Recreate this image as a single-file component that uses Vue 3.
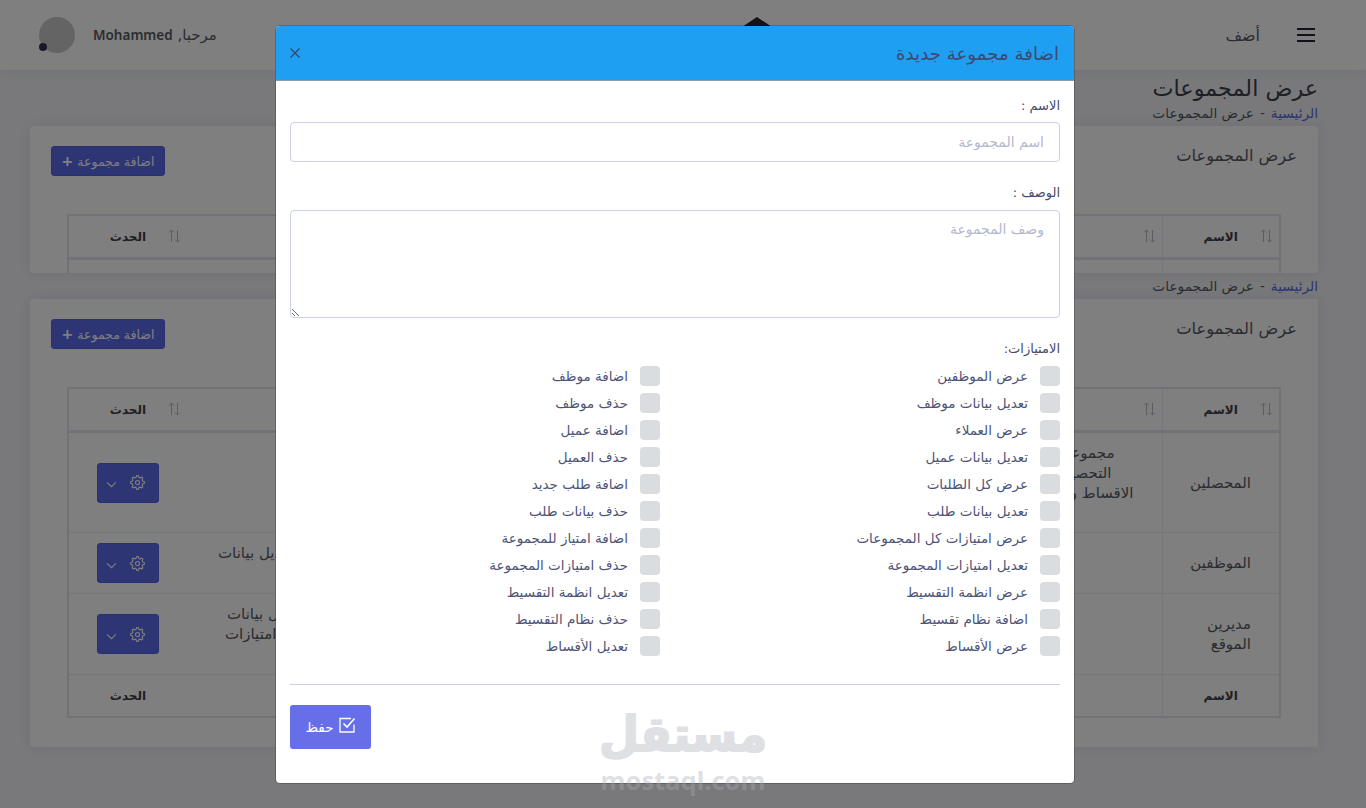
<template>
  <div class="page" dir="rtl">
    <header class="topbar">
      <div class="top-start">
        <svg class="burger" width="20" height="16" viewBox="0 0 20 16"><path d="M1 2h18M1 8h18M1 14h18" stroke="#1f2430" stroke-width="2" fill="none" /></svg>
        <span class="add-link">أضف</span>
      </div>
      <svg class="logo" width="36" height="12" viewBox="0 0 36 12"><polygon points="18,0 33,10 33,12 3,12 3,10" fill="#23262e" /></svg>
      <div class="top-end">
        <span class="hello">مرحبا, <b>Mohammed</b></span>
        <span class="avatar"><i class="status"></i></span>
      </div>
    </header>

    <main class="content">
      <h1 class="page-title">عرض المجموعات</h1>
      <div class="crumbs"><a>الرئيسية</a><span>-</span><span>عرض المجموعات</span></div>

      <section class="card card-cut">
        <div class="card-head">
          <h2>عرض المجموعات</h2>
          <button class="btn-add">اضافة مجموعة <span class="plus">+</span></button>
        </div>
        <table class="groups">
          <colgroup><col class="c-name" /><col class="c-desc" /><col class="c-priv" /><col class="c-act" /></colgroup>
          <thead>
            <tr>
              <th v-for="h in heads" :key="h">{{ h }}<svg class="sort" width="13" height="14" viewBox="0 0 13 14"><path d="M3.5 13V1M1 3.5 3.500 1 6 3.500M9.500 1v12M7 10.500 9.500 13 12 10.500" fill="none" stroke="#b8bac6" stroke-width="1" /></svg></th>
            </tr>
          </thead>
          <tbody>
            <tr class="stub"><td></td><td></td><td></td><td></td></tr>
          </tbody>
        </table>
      </section>

      <div class="crumbs crumbs-2"><a>الرئيسية</a><span>-</span><span>عرض المجموعات</span></div>

      <section class="card">
        <div class="card-head">
          <h2>عرض المجموعات</h2>
          <button class="btn-add">اضافة مجموعة <span class="plus">+</span></button>
        </div>
        <table class="groups">
          <colgroup><col class="c-name" /><col class="c-desc" /><col class="c-priv" /><col class="c-act" /></colgroup>
          <thead>
            <tr>
              <th v-for="h in heads" :key="h">{{ h }}<svg class="sort" width="13" height="14" viewBox="0 0 13 14"><path d="M3.5 13V1M1 3.5 3.500 1 6 3.500M9.500 1v12M7 10.500 9.500 13 12 10.500" fill="none" stroke="#b8bac6" stroke-width="1" /></svg></th>
            </tr>
          </thead>
          <tbody>
            <tr v-for="row in rows" :key="row.name" :style="{ height: row.h + 'px' }">
              <td class="name">{{ row.name }}</td>
              <td class="lines">
                <div v-for="l in row.desc" :key="l.t" :style="{ paddingRight: l.pad + 'px' }">{{ l.t }}</div>
              </td>
              <td class="lines priv-cell">
                <div v-for="l in row.priv" :key="l.t" :style="{ paddingLeft: l.pad + 'px' }">{{ l.t }}</div>
              </td>
              <td class="act">
                <button class="btn-gear">
                  <svg width="15" height="15" viewBox="0 0 16 16" fill="none" stroke="#fff" stroke-width="1.2"><circle cx="8" cy="8" r="2.200" /><polygon :points="gearPoints" stroke-linejoin="round" /></svg>
                  <svg class="chev" width="11" height="7" viewBox="0 0 12 8" fill="none" stroke="#fff" stroke-width="1.2"><path d="M1 1.500 6 6.500l5-5" /></svg>
                </button>
              </td>
            </tr>
          </tbody>
          <tfoot>
            <tr><th>الاسم</th><th>الوصف</th><th>الامتيازات</th><th>الحدث</th></tr>
          </tfoot>
        </table>
      </section>
    </main>

    <div class="backdrop"></div>

    <div class="modal">
      <div class="modal-head">
        <h3>اضافة مجموعة جديدة</h3>
        <svg class="close" width="10" height="10" viewBox="0 0 10 10"><path d="M.5.5l9 9M9.500.5l-9 9" stroke="#3a3f6b" stroke-width="1.200" /></svg>
      </div>
      <div class="modal-body">
        <label class="field-label">الاسم :</label>
        <input class="control" type="text" placeholder="اسم المجموعة" />
        <label class="field-label label-desc">الوصف :</label>
        <textarea class="control area" placeholder="وصف المجموعة"></textarea>
        <label class="field-label label-priv">الامتيازات:</label>
        <div class="privs">
          <label v-for="p in privileges" :key="p" class="priv"><i class="check"></i><span>{{ p }}</span></label>
        </div>
        <hr class="rule" />
        <button class="btn-save">
          <svg width="17" height="16" viewBox="0 0 17 16" fill="none" stroke="#fff"><path d="M15 7.500V15H1V1.500h11" stroke-width="1.300" /><path d="M4.500 6.500 8 10l7.500-8.500" stroke-width="1.600" /></svg>
          <span>حفظ</span>
        </button>
      </div>
    </div>

    <div class="mark">
      <span class="mark-ar">مستقل</span>
      <span class="mark-en">mostaql.com</span>
    </div>
  </div>
</template>

<script setup>
const heads = ['الاسم', 'الوصف', 'الامتيازات', 'الحدث']

const rows = [
  {
    name: 'المحصلين',
    h: 101,
    desc: [{ t: 'مجموعة', pad: 47 }, { t: 'التحصيل', pad: 50 }, { t: 'الاقساط و', pad: 28 }],
    priv: []
  },
  { name: 'الموظفين', h: 61, desc: [], priv: [{ t: 'تعديل بيانات', pad: 27 }] },
  {
    name: 'مديرين الموقع',
    h: 81,
    desc: [],
    priv: [{ t: 'تعديل بيانات', pad: 36 }, { t: 'تعديل امتيازات', pad: 34 }]
  }
]

const privileges = [
  'عرض الموظفين', 'اضافة موظف',
  'تعديل بيانات موظف', 'حذف موظف',
  'عرض العملاء', 'اضافة عميل',
  'تعديل بيانات عميل', 'حذف العميل',
  'عرض كل الطلبات', 'اضافة طلب جديد',
  'تعديل بيانات طلب', 'حذف بيانات طلب',
  'عرض امتيازات كل المجموعات', 'اضافة امتياز للمجموعة',
  'تعديل امتيازات المجموعة', 'حذف امتيازات المجموعة',
  'عرض انظمة التقسيط', 'تعديل انظمة التقسيط',
  'اضافة نظام تقسيط', 'حذف نظام التقسيط',
  'عرض الأقساط', 'تعديل الأقساط'
]

// cog outline: 8 teeth, alternating radius
const gearPoints = Array.from({ length: 32 }, (_, i) => {
  const r = i % 4 < 2 ? 7.4 : 5.6
  const a = ((i - 0.5) * Math.PI) / 16
  return `${(8 + r * Math.cos(a)).toFixed(2)},${(8 + r * Math.sin(a)).toFixed(2)}`
}).join(' ')
</script>

<style>
html, body { margin: 0; height: 100%; overflow: hidden; }
</style>

<style scoped>
.page {
  position: relative;
  width: 1366px;
  height: 808px;
  overflow: hidden;
  background: #f2f3f8;
  font-family: "DejaVu Sans", "Noto Sans", sans-serif;
  font-size: 12px;
  color: #575962;
}
.topbar {
  height: 70px;
  background: #fff;
  box-shadow: 0 1px 12px rgba(80, 80, 120, .1);
  display: flex;
  align-items: center;
  justify-content: space-between;
  padding: 0 50px 0 39px;
  position: relative;
}
.top-start { display: flex; align-items: center; gap: 36px; }
.add-link { font-size: 16px; }
.logo { position: absolute; left: 739px; top: 17px; }
.top-end { display: flex; align-items: center; gap: 18px; }
.hello { font-size: 15px; }
.hello b { font-family: "Noto Sans", sans-serif; font-weight: 600; font-size: 13.5px; }
.avatar { width: 36px; height: 36px; border-radius: 50%; background: #c9c9c9; position: relative; }
.status { position: absolute; left: 0; bottom: 2px; width: 8px; height: 8px; border-radius: 50%; background: #2f3350; }

.content { padding: 6px 48px 0 30px; }
.page-title { margin: 0; font-size: 22.3px; font-weight: 400; line-height: 24px; color: #3f4047; }
.crumbs { display: flex; gap: 6px; font-size: 13.7px; line-height: 16px; height: 21px; margin-top: 5px; }
.crumbs a { color: #5867dd; }
.crumbs-2 { height: 26px; margin-top: 0; align-items: center; }
.card {
  background: #fff;
  border-radius: 4px;
  box-shadow: 0 0 14px rgba(80, 80, 120, .12);
  padding: 20px 37px 29px;
}
.card-cut { height: 147px; box-sizing: border-box; padding-bottom: 0; overflow: hidden; }
.card-head { display: flex; justify-content: space-between; align-items: flex-start; height: 68px; margin: 0 -16px; }
.card-head h2 { margin: 0; font-size: 16.3px; font-weight: 400; line-height: 20px; color: #575962; }
.btn-add {
  width: 114px;
  height: 30px;
  border: 1px solid #5161e0;
  border-radius: 3px;
  background: #5d6bea;
  color: #fff;
  font: 12.5px "DejaVu Sans", sans-serif;
  padding: 0;
  white-space: nowrap;
}
.plus { font-size: 14px; font-weight: 700; }
.groups {
  table-layout: fixed;
  width: 1214px;
  border-collapse: collapse;
  border: 2px solid #e3e4ed;
}
.c-name { width: 118px; }
.c-priv { width: 310px; }
.c-act { width: 123px; }
th, td { border: 1px solid #ebedf2; text-align: center; font-size: 12px; padding: 0 10px; line-height: 20px; position: relative; }
th:last-child, td.act { padding: 0 14px 0 10px; }
td.name { font-size: 15px; text-align: right; padding: 0 28px; }
td.lines { padding: 0 0 20px; font-size: 15px; text-align: right; white-space: nowrap; }
td.priv-cell { text-align: left; }
.stub td { height: 30px; }
thead th { height: 41px; border-bottom: 3px solid #e3e4ed; font-weight: 700; color: #3f4047; }
thead th:nth-child(n+3), td:nth-child(n+3), tfoot th:nth-child(n+3) { border-left: 0; border-right: 0; }
tfoot th { height: 41px; font-weight: 700; color: #3f4047; }
.sort { position: absolute; right: 6px; top: 13px; }
th:last-child .sort { right: 10px; }
.btn-gear {
  width: 62px;
  height: 40px;
  background: #5d6bea;
  border: 1px solid #5161e0;
  border-radius: 3px;
  display: inline-flex;
  align-items: center;
  justify-content: center;
  gap: 13px;
  padding: 0 6px 0 0;
  vertical-align: middle;
}
.chev { margin-top: 4px; }

.backdrop { position: absolute; inset: 0; background: rgba(0, 0, 0, .5); }

.modal {
  position: absolute;
  left: 276px;
  top: 26px;
  width: 798px;
  height: 757px;
  background: #fff;
  border-radius: 4px;
  overflow: hidden;
  box-shadow: 0 0 0 1px rgba(0, 0, 0, .2);
}
.modal-head {
  height: 54px;
  background: #1e9ff2;
  display: flex;
  align-items: center;
  justify-content: space-between;
  padding: 0 15px 0 14px;
  border-bottom: 1px solid #8f9aa5;
}
.modal-head h3 { margin: 0; font-size: 18.2px; font-weight: 400; color: #3e4a6e; }
.modal-body { padding: 17px 14px 0 14px; display: flex; flex-direction: column; align-items: stretch; }
.field-label { font-size: 13px; line-height: 16px; color: #464c68; }
.control {
  box-sizing: border-box;
  width: 770px;
  height: 40px;
  margin-top: 8px;
  border: 1px solid #cacfe7;
  border-radius: 4px;
  padding: 0 15px;
  font: 14px "DejaVu Sans", sans-serif;
  color: #3b4781;
  background: #fff;
  outline: 0;
}
.control::placeholder { color: #b4b8cc; opacity: 1; }
.area { height: 108px; margin-top: 9px; padding-top: 10px; display: block; resize: vertical; }
.label-desc { margin-top: 23px; }
.label-priv { margin-top: 23px; }
.privs {
  display: grid;
  grid-template-columns: 400px 370px;
  grid-auto-rows: 27px;
  margin-top: 5.5px;
}
.priv { display: flex; align-items: center; gap: 12px; font-size: 13.5px; color: #4e5478; }
.check { width: 20px; height: 20px; border-radius: 4px; background: #d9dde0; flex: none; }
.rule { width: 100%; height: 1px; border: 0; background: #cacfe7; margin: 24.5px 0 20px; }
.btn-save {
  width: 81px;
  height: 44px;
  border: 0;
  border-radius: 3px;
  background: #666ee8;
  color: #fff;
  font: 13.5px "DejaVu Sans", sans-serif;
  display: flex;
  align-items: center;
  justify-content: center;
  gap: 5px;
  padding: 0;
  align-self: flex-end;
}
.btn-save svg { margin-bottom: 5px; }

.mark {
  position: absolute;
  left: 600px;
  top: 706px;
  width: 166px;
  display: flex;
  flex-direction: column;
  align-items: center;
  pointer-events: none;
  color: #a9abb3;
  opacity: .36;
}
.mark-ar {
  font-family: "DejaVu Sans", sans-serif;
  font-size: 46px;
  font-weight: 700;
  line-height: 56px;
  white-space: nowrap;
  -webkit-text-stroke: 2px #a9abb3;
  transform: scaleY(1.05);
}
.mark-en { font-family: "Noto Sans", sans-serif; font-size: 25.5px; font-weight: 700; line-height: 24px; margin-top: 6px; }
</style>
